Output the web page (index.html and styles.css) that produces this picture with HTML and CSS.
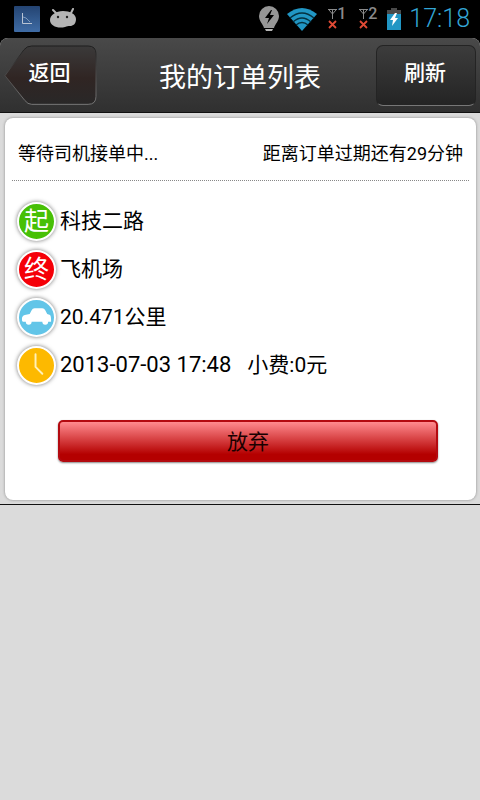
FILE: index.html
```html
<!DOCTYPE html>
<html lang="zh-CN">
<head>
<meta charset="utf-8">
<meta name="viewport" content="width=device-width, initial-scale=1">
<title>我的订单列表</title>
<link rel="stylesheet" href="styles.css">
</head>
<body>
<div class="status">
  <div class="status-group">
    <svg width="26" height="26" viewBox="0 0 26 26" aria-hidden="true">
      <defs><linearGradient id="app" x1="0" y1="0" x2="0" y2="1"><stop offset="0" stop-color="#244472"/><stop offset="1" stop-color="#3f6ca5"/></linearGradient></defs>
      <rect width="26" height="26" rx="1" fill="url(#app)"/>
      <path d="M8.500 7V17.500H18" fill="none" stroke="#b9c4d4"/>
      <path d="M9 11l3 1 4 4" fill="none" stroke="#7d99bd"/>
    </svg>
    <svg width="28" height="22" viewBox="0 0 28 22" aria-hidden="true">
      <path d="M3 2l4 4M23 1l-2 4" stroke="#b4b4b4" stroke-width="2" stroke-linecap="round"/>
      <path d="M0 12C0 7 6 3 13 3s13 3 13 8c0 5-3 7-6 7-2 0-3 0-5 1-7 2-15-1-15-7z" fill="#b4b4b4"/>
      <circle cx="8" cy="9" r="1.200" fill="#222"/><circle cx="17" cy="9" r="1.200" fill="#222"/>
    </svg>
  </div>
  <div class="status-group status-right">
    <svg width="20" height="26" viewBox="0 0 20 26" aria-hidden="true">
      <path d="M10 0a10 10 0 0 0-10 10c0 5 4 8 5 12h10c1-4 5-7 5-12A10 10 0 0 0 10 0z" fill="#969696"/>
      <path d="M6 23h8l-1 2H7z" fill="#b5b5b5"/>
      <path d="M12 4L6 12h4l-2 6 7-9h-4l2-5z" fill="#000"/>
    </svg>
    <svg width="30" height="23" viewBox="0 0 30 23" aria-hidden="true">
      <path d="M0 6Q15-6 30 6L15 23z" fill="#2196c4"/>
      <path d="M3 10Q15 0 27 10M6 14Q15 6 24 14M9 17Q15 12 21 17" fill="none" stroke="#04303f" stroke-width="1.500"/>
    </svg>
    <span class="sim">
      <svg width="9" height="22" viewBox="0 0 9 22" aria-hidden="true"><path d="M0 1.500h9M1 2l3.500 4L8 2M4.500 1v10" fill="none" stroke="#8a8a8a"/><path d="M1 13l7 7M8 13l-7 7" stroke="#e04a35" stroke-width="1.800"/></svg><span>1</span>
    </span>
    <span class="sim">
      <svg width="9" height="22" viewBox="0 0 9 22" aria-hidden="true"><path d="M0 1.500h9M1 2l3.500 4L8 2M4.500 1v10" fill="none" stroke="#8a8a8a"/><path d="M1 13l7 7M8 13l-7 7" stroke="#e04a35" stroke-width="1.800"/></svg><span>2</span>
    </span>
    <svg width="14" height="22" viewBox="0 0 14 22" aria-hidden="true">
      <path d="M4 0h6v2h4v4H0V2h4z" fill="#4a4a4a"/><path d="M0 6h14v16H0z" fill="#2196c4"/>
      <path d="M8 5L3 12h3l-1 6 6-8H8l2-5z" fill="#fff"/>
    </svg>
    <time class="clock">17:18</time>
  </div>
</div>

<header class="header">
  <button class="back" type="button">
    <svg class="back-shape" viewBox="0 0 94 61" aria-hidden="true">
      <defs>
        <linearGradient id="bk" x1="0" y1="0" x2="0" y2="1"><stop offset="0" stop-color="#3b3a3a"/><stop offset=".55" stop-color="#302523"/><stop offset="1" stop-color="#292828"/></linearGradient>
        <linearGradient id="edge" x1="0" y1="0" x2="0" y2="1"><stop offset="0" stop-color="#1c1c1c"/><stop offset=".5" stop-color="#4c4a4a"/><stop offset="1" stop-color="#777"/></linearGradient>
      </defs>
      <path d="M1 31L20 5Q23 1 28 1H85Q93 1 93 9V52Q93 60 85 60H28Q24 60 21 56z" fill="url(#bk)" stroke="url(#edge)"/>
    </svg>
    <span class="back-text">返回</span>
  </button>
  <h1 class="title">我的订单列表</h1>
  <button class="refresh" type="button">刷新</button>
</header>

<main class="list">
  <article class="card">
    <div class="card-head"><span>等待司机接单中...</span><span>距离订单过期还有29分钟</span></div>
    <ul class="details">
      <li><span class="badge start">起</span><span>科技二路</span></li>
      <li><span class="badge end">终</span><span>飞机场</span></li>
      <li><span class="badge distance"><svg width="36" height="36" viewBox="0 0 36 36" aria-hidden="true"><path d="M3 20q0-3 3-4l5-1 2-4q1-2 3-2h8q2 0 3 2l2 4 3 1q1 1 1 5v2h-3a3 3 0 0 1-6 0H13a3 3 0 0 1-6 0H4q-1 0-1-3z" fill="#fff"/></svg></span><span>20.471公里</span></li>
      <li><span class="badge when"><svg width="36" height="36" viewBox="0 0 36 36" aria-hidden="true"><path d="M17 7V20l7 7" fill="none" stroke="#fff1b8" stroke-width="2" stroke-linecap="round"/></svg></span><time class="date">2013-07-03 17:48</time><span class="tip">小费:0元</span></li>
    </ul>
    <div class="actions"><button class="cancel" type="button">放弃</button></div>
  </article>
</main>
</body>
</html>
```
FILE: styles.css
```css
* { box-sizing: border-box; }

body {
  margin: 0;
  min-height: 100vh;
  background: #dbdbdb;
  color: #000;
  font-family: Roboto, "Noto Sans CJK SC", sans-serif;
  font-size: 21px;
}

button {
  font: inherit;
  padding: 0;
  border: 0;
}

svg { display: block; }

.status {
  display: flex;
  justify-content: space-between;
  align-items: center;
  height: 38px;
  padding: 0 10px 0 14px;
  background: #000;
}

.status-group {
  display: flex;
  align-items: center;
  gap: 10px;
}

.status-right { gap: 8px; }

.sim {
  display: flex;
  width: 20px;
  margin-left: 3px;
  color: #8a8a8a;
  font-size: 16px;
  font-weight: 500;
  line-height: 12px;
}

.clock {
  color: #33a6d6;
  font-size: 25px;
  font-weight: 300;
  line-height: 38px;
}

.header {
  display: grid;
  grid-template-columns: 100px 1fr 100px;
  align-items: center;
  height: 75px;
  padding: 0 4px;
  border-bottom: 1px solid #111;
  border-radius: 8px 8px 0 0;
  background: linear-gradient(#494949, #303030);
  box-shadow: 0 -8px 0 #000;
  color: #fff;
}

.back {
  position: relative;
  width: 93px;
  height: 61px;
  background: none;
  color: #fff;
  font-weight: 500;
}

.back-shape {
  position: absolute;
  inset: 0;
}

.back-text {
  position: relative;
  display: block;
  padding: 0 2px 8px 0;
}

.title {
  margin: 0;
  text-align: center;
  font-size: 27px;
  font-weight: 400;
}

.refresh {
  height: 61px;
  padding: 0 2px 8px 0;
  border: 1px solid #242424;
  border-bottom-color: #777;
  border-radius: 7px;
  background: linear-gradient(#3c3c3c, #242424);
  color: #fff;
  font-weight: 500;
}

.list {
  padding: 5px 4px 4px 5px;
  border-bottom: 1px solid #111;
}

.card {
  padding: 10px 7px 38px;
  border-radius: 8px;
  background: #fff;
  box-shadow: 0 0 3px #888;
}

.card-head {
  display: flex;
  justify-content: space-between;
  padding: 0 6px;
  border-bottom: 1px dotted #888;
  font-size: 18px;
  line-height: 52px;
}

.details {
  margin: 0;
  padding: 16px 5px 0;
  list-style: none;
}

.details li {
  display: flex;
  align-items: center;
  gap: 4px;
  height: 48px;
  line-height: 28px;
}

.badge {
  display: flex;
  align-items: center;
  justify-content: center;
  width: 39px;
  height: 39px;
  border: 2px solid #fff;
  border-radius: 50%;
  box-shadow: 0 0 4px #777;
  color: #fff;
  font-size: 25px;
  line-height: 35px;
}

.start { background: #47c006; }
.end { background: #f50008; }
.distance { background: #62c5e8; }
.when { background: #fdb900; }

.date { font-size: 22px; }

.tip { margin-left: 12px; }

.actions {
  padding: 31px 31px 0 46px;
}

.cancel {
  display: block;
  width: 100%;
  height: 42px;
  padding-bottom: 3px;
  border: 2px solid #b30a10;
  border-radius: 5px;
  background: linear-gradient(#ff8b8f, #b40000 85%);
  box-shadow: 0 1px 2px #888;
  color: #1a0000;
}
```
